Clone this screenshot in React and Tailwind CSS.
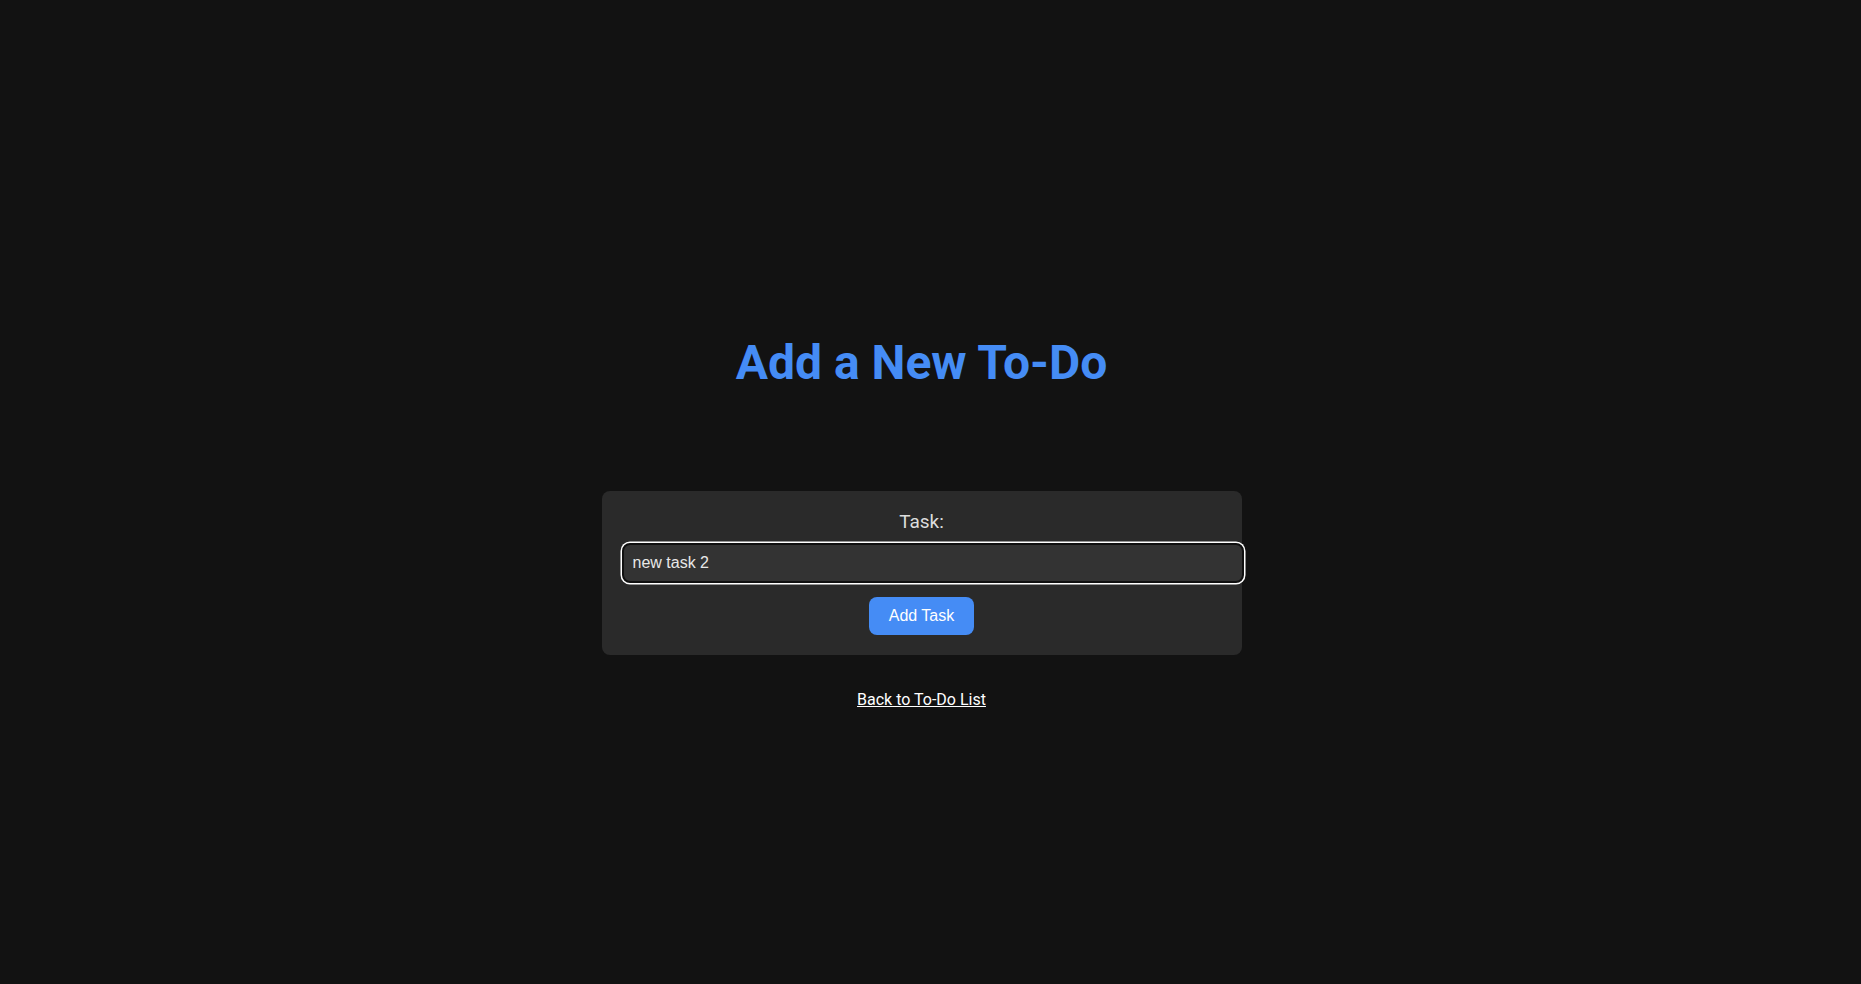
import React, { useState } from 'react';

// Add To-Do page: title, a small form card, and a link back to the list
const App = () => {
    const [task, setTask] = useState('new task 2');

    return (
        <div className="min-h-[984px] w-full bg-[#121212] font-['Roboto',sans-serif] text-[#e6e6e6]">
            <div className="flex flex-col items-center pr-[18px] pt-[335px]">
                <h1 className="text-[48px] leading-[56px] font-bold text-[#458cf5]">Add a New To-Do</h1>

                {/* Form card */}
                <form
                    className="mt-[100px] w-[640px] rounded-lg bg-[#2a2a2a] p-5"
                    onSubmit={(e) => e.preventDefault()}
                >
                    <label htmlFor="task" className="block text-center text-[19px] leading-[22px] text-[#dddddd]">
                        Task:
                    </label>
                    <input
                        id="task"
                        type="text"
                        value={task}
                        onChange={(e) => setTask(e.target.value)}
                        className="mt-[10px] box-content block w-full rounded-lg border-2 border-[#101010] bg-[#333333] px-[9px] py-[9px] font-['Liberation_Sans',Arial,sans-serif] text-[16px] leading-[18px] text-[#e8e8e8] shadow-[0_0_0_1.5px_#ffffff] outline-none"
                    />
                    <div className="mt-[14px] flex justify-center">
                        <button
                            type="submit"
                            className="rounded-lg bg-[#458cf5] px-5 py-[10px] font-['Liberation_Sans',Arial,sans-serif] text-[16px] leading-[18px] text-white"
                        >
                            Add Task
                        </button>
                    </div>
                </form>

                <a href="#" className="mt-[35px] text-[16px] leading-[19px] text-white underline">
                    Back to To-Do List
                </a>
            </div>
        </div>
    );
};

export default App;
